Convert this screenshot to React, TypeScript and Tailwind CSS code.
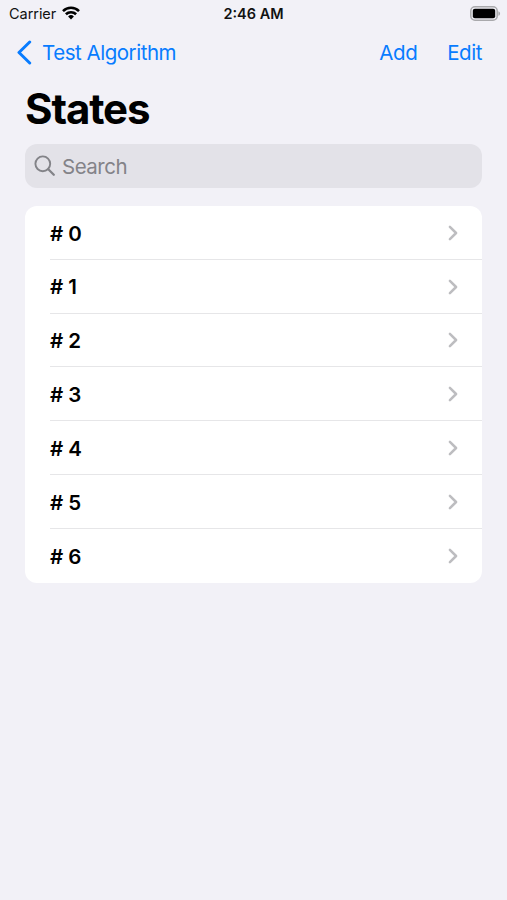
const states = ["# 0", "# 1", "# 2", "# 3", "# 4", "# 5", "# 6"];

function StatusBar() {
  return (
    <div className="grid h-[26px] grid-cols-3 items-center pl-[9px] pr-[6px] text-[#111]">
      <div className="flex items-center gap-[6px]">
        <span className="pt-[2px] text-[14.5px] leading-none tracking-[-0.05px]">Carrier</span>
        <svg width="18" height="14" viewBox="0 0 18 14" fill="none" stroke="#000" strokeWidth="2.6">
          <path d="M1 5.1a11.4 11.4 0 0 1 16 0" />
          <path d="M3.9 8.3a7.3 7.3 0 0 1 10.2 0" />
          <path d="M9 13.4 6.1 10.5a4.1 4.1 0 0 1 5.8 0Z" fill="#000" stroke="none" />
        </svg>
      </div>
      <span className="-ml-[3px] pt-[2px] text-center text-[14.5px] font-semibold leading-none">2:46 AM</span>
      <svg className="justify-self-end" width="31" height="15" viewBox="0 0 31 15">
        <rect x="0.8" y="0.8" width="26.4" height="13.4" rx="4.2" fill="none" stroke="#a9a9ac" strokeWidth="1.5" />
        <rect x="2.8" y="2.8" width="22.4" height="9.4" rx="2" fill="#000" />
        <path d="M28.4 5.2v4.6c2.2-.9 2.2-3.7 0-4.6Z" fill="#a9a9ac" />
      </svg>
    </div>
  );
}

function NavBar() {
  return (
    <div className="flex h-[53px] items-center justify-between pl-[17px] pr-[25px] text-[20.5px] text-[#087cff]">
      <button className="flex items-center gap-[10px]">
        <svg width="15" height="25" viewBox="0 0 15 25" fill="none" stroke="currentColor" strokeWidth="3" strokeLinecap="round" strokeLinejoin="round">
          <path d="M12.7 2 2 12.5 12.7 23" />
        </svg>
        <span className="pt-[2px] tracking-[-0.47px]">Test Algorithm</span>
      </button>
      <div className="flex gap-[30px] pt-[2px] tracking-[-0.45px]">
        <button>Add</button>
        <button>Edit</button>
      </div>
    </div>
  );
}

function StateRow({ label }: { label: string }) {
  return (
    <li className="group pl-[25px]">
      <div className="flex h-[53.8px] items-center justify-between border-b border-[#e6e6e8] pr-6 group-last:border-b-0">
        <span className="pt-[3px] text-[20.5px] font-semibold text-black">{label}</span>
        <svg className="mt-px" width="10" height="16" viewBox="0 0 10 16" fill="none" stroke="#bdbdc0" strokeWidth="2.5" strokeLinecap="round" strokeLinejoin="round">
          <path d="m1.9 1.8 6.2 6.2-6.2 6.2" />
        </svg>
      </div>
    </li>
  );
}

export default function App() {
  return (
    <div className="min-h-screen bg-[#f2f1f7] font-['Inter',sans-serif]">
      <StatusBar />
      <NavBar />
      <main className="px-[25px]">
        <h1 className="h-[65px] pt-[6px] text-[42px] font-bold leading-[48px] tracking-[-1.1px] text-black">States</h1>
        <div className="flex h-[44px] items-center gap-[6px] rounded-[12px] bg-[#e3e2e8] pl-[9px] text-[20.5px] text-[#838388]">
          <svg width="22" height="22" viewBox="0 0 22 22" fill="none" stroke="currentColor" strokeWidth="1.9" strokeLinecap="round">
            <circle cx="8.8" cy="8.8" r="7.4" />
            <path d="m14.3 14.3 5.5 5.5" strokeWidth="2.3" />
          </svg>
          <span className="pt-[2px] tracking-[-0.5px]">Search</span>
        </div>
        <ul className="mt-[18px] rounded-[12px] bg-white">
          {states.map((label) => (
            <StateRow key={label} label={label} />
          ))}
        </ul>
      </main>
    </div>
  );
}
